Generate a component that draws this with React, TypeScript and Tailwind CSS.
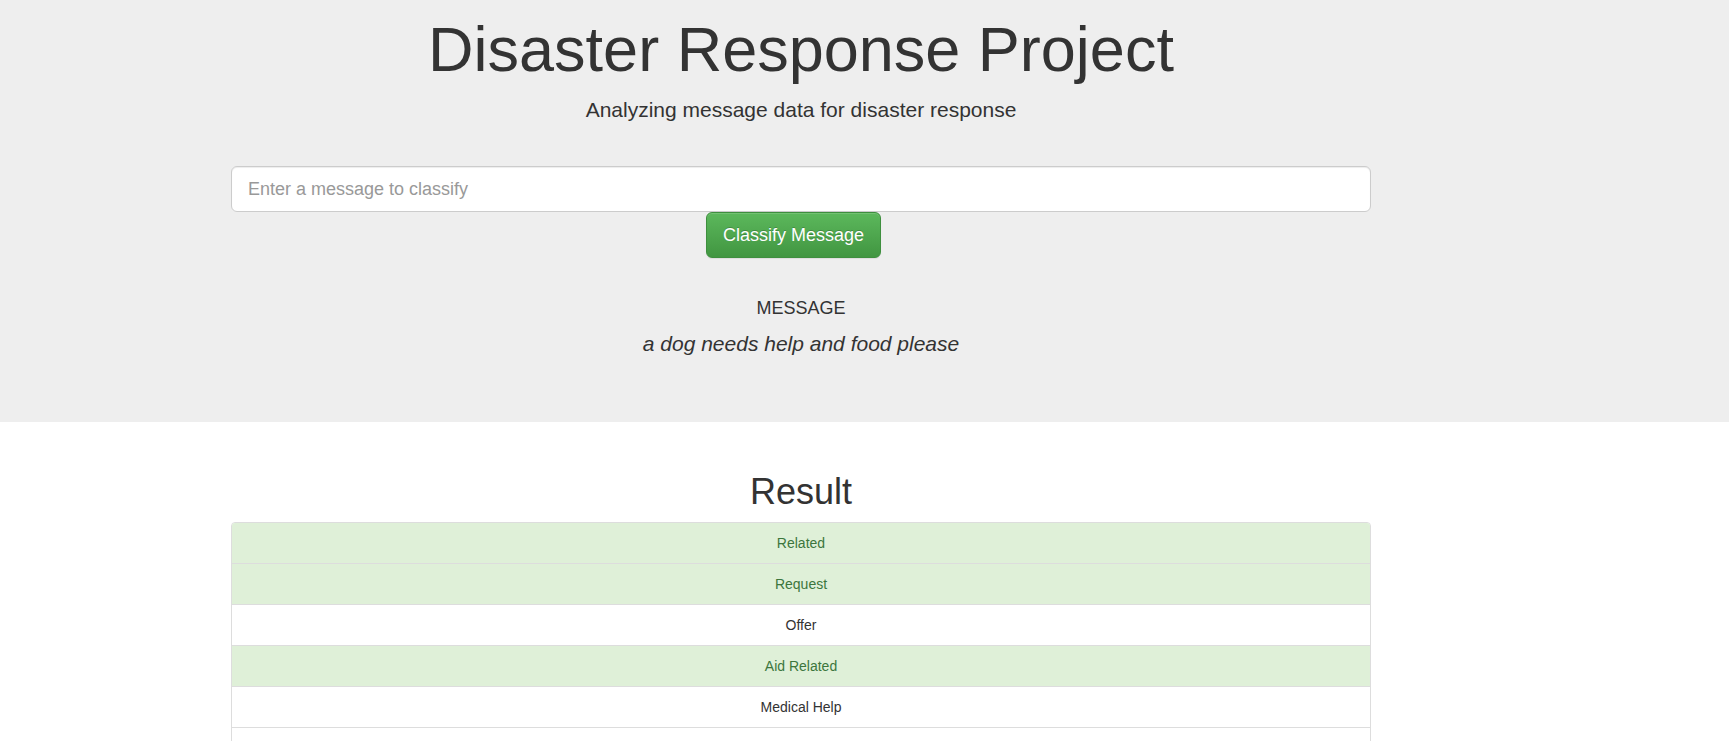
import React from "react";

const rows: { label: string; on: boolean }[] = [
  { label: "Related", on: true },
  { label: "Request", on: true },
  { label: "Offer", on: false },
  { label: "Aid Related", on: true },
  { label: "Medical Help", on: false },
  { label: "Medical Products", on: false },
  { label: "Search And Rescue", on: false },
];

export default function App() {
  return (
    <div
      className="min-h-[741px] bg-white text-[#333] text-[14px] leading-[20px]"
      style={{ fontFamily: '"Liberation Sans", Arial, Helvetica, sans-serif' }}
    >
      <div className="bg-[#eeeeee] h-[422px]">
        <div className="w-[1170px] ml-[216px] px-[15px] pt-[15px]">
          <h1 className="text-center text-[63px] leading-[69px] font-normal">
            Disaster Response Project
          </h1>
          <p className="text-center text-[21px] leading-[30px] mt-[11px]">
            Analyzing message data for disaster response
          </p>
          <div className="mt-[41px]">
            <input
              type="text"
              placeholder="Enter a message to classify"
              className="block w-full h-[46px] px-[16px] text-[18px] bg-white border border-[#cccccc] rounded-[6px] shadow-[inset_0_1px_1px_rgba(0,0,0,0.075)] placeholder:text-[#999999] outline-none"
            />
            <div className="flex justify-center pr-[15px]">
              <button
                type="button"
                className="h-[46px] px-[16px] text-[18px] leading-[24px] text-white rounded-[6px] border border-[#3e8f3e] bg-gradient-to-b from-[#5cb85c] to-[#419641] shadow-[inset_0_1px_0_rgba(255,255,255,0.15),0_1px_1px_rgba(0,0,0,0.075)] [text-shadow:0_-1px_0_rgba(0,0,0,0.2)]"
              >
                Classify Message
              </button>
            </div>
          </div>
          <h4 className="text-center text-[18px] leading-[20px] mt-[40px]">MESSAGE</h4>
          <p className="text-center text-[21px] leading-[30px] italic mt-[11px]">
            a dog needs help and food please
          </p>
        </div>
      </div>
      <div className="w-[1170px] ml-[216px] px-[15px]">
        <h1 className="text-center text-[36px] leading-[40px] font-normal mt-[50px]">Result</h1>
        <div className="mt-[10px] border border-[#dddddd] rounded-[4px] divide-y divide-[#dddddd] overflow-hidden">
          {rows.map((r) => (
            <div
              key={r.label}
              className={
                r.on
                  ? "box-content h-[40px] px-[15px] flex items-center justify-center bg-[#dff0d8] text-[#3c763d]"
                  : "box-content h-[40px] px-[15px] flex items-center justify-center bg-white text-[#333]"
              }
            >
              {r.label}
            </div>
          ))}
        </div>
      </div>
    </div>
  );
}
